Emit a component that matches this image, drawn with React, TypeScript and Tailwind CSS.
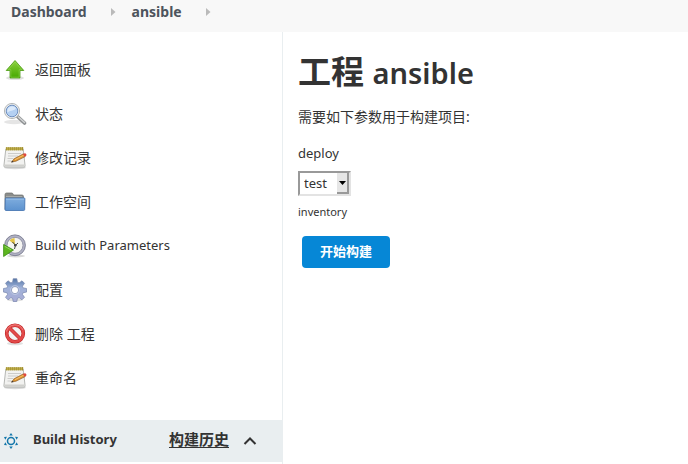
import type { ReactNode } from "react";

const BackIcon = () => (
  <svg viewBox="0 0 24 24" className="size-6">
    <defs>
      <linearGradient id="up" x1="0" y1="0" x2="0" y2="1">
        <stop offset="0" stopColor="#8ad03c" />
        <stop offset="1" stopColor="#45a800" />
      </linearGradient>
    </defs>
    <ellipse cx="12" cy="20" rx="9" ry="2" fill="#000" opacity="0.12" />
    <path d="M12 2.500 20.800 12.500H17v7.500H7V12.500H3.200z" fill="url(#up)" stroke="#4a9a12" strokeWidth="0.8" />
    <path d="M12 4 18.800 11.700H16.200V19.200H7.800V11.700H5.200z" fill="none" stroke="#9fdc62" strokeWidth="0.5" />
  </svg>
);

const SearchIcon = () => (
  <svg viewBox="0 0 24 24" className="size-6">
    <ellipse cx="11" cy="20" rx="10" ry="2.200" fill="#000" opacity="0.1" />
    <path d="m15 15 6.500 6" stroke="#8d9092" strokeWidth="3.600" strokeLinecap="round" />
    <path d="m15.500 15 6 5.500" stroke="#d0d2d3" strokeWidth="1.600" strokeLinecap="round" />
    <circle cx="9" cy="9" r="7.600" fill="#eceeef" stroke="#a5a8aa" strokeWidth="0.8" />
    <circle cx="9" cy="9" r="5.800" fill="#b4d0f2" stroke="#6f90c0" strokeWidth="1" />
    <path d="M4.300 9A4.800 4.800 0 0 1 13 6.300C11.500 9 8 8 4.300 10.500z" fill="#dceafb" />
  </svg>
);

const NotepadIcon = () => (
  <svg viewBox="0 0 24 24" className="size-6">
    <ellipse cx="12" cy="21.800" rx="11" ry="1.500" fill="#000" opacity="0.15" />
    <path d="M2.800 3h17.400l1.900 16.800a1 1 0 0 1-1 1.200H1.900a1 1 0 0 1-1-1.200z" fill="#f2f2f0" stroke="#a5a7a3" strokeWidth="0.8" />
    <path d="M1.400 18.500h20.200v1.800H1.400z" fill="#d0d0cd" />
    <path d="M2.800 1.300h17.400v2.900H2.800z" fill="#cdbc57" />
    <path
      d="M3.800 1v3.500M5.800 1v3.500M7.800 1v3.500M9.800 1v3.500M11.800 1v3.500M13.800 1v3.500M15.800 1v3.500M17.800 1v3.500M19.600 1v3.500"
      stroke="#8e7c1e"
      strokeWidth="0.8"
    />
    <path d="M5 7.500h13M5 10h10M4.500 12.500h6M4.500 15h4" stroke="#c2c2c0" strokeWidth="0.8" />
    <path d="m8.500 16 2.700-3.300L20.500 7.800l1.700 2.800-9.200 4.600z" fill="#dc942f" stroke="#87531c" strokeWidth="0.6" />
    <path d="m12 13.700 9-4.700" stroke="#f7c473" strokeWidth="0.9" />
    <path d="m19.900 8.100 1.400-.7q1.400-.3 2 .8t-.4 1.700l-1.500.9z" fill="#df4a3f" />
    <path d="m8 16.500 1.700-1.800.9 1.200z" fill="#333" />
  </svg>
);

const FolderIcon = () => (
  <svg viewBox="0 0 24 24" className="size-6">
    <defs>
      <linearGradient id="folder" x1="0" y1="0" x2="0" y2="1">
        <stop offset="0" stopColor="#7fadde" />
        <stop offset="1" stopColor="#5c92cf" />
      </linearGradient>
    </defs>
    <path d="M2 19.500V4.500Q2 3 3.500 3h5.300q1.200 0 1.700 2H19q1.500 0 1.500 1.500v13z" fill="#8b8d8b" stroke="#6c6e6c" strokeWidth="0.7" />
    <path d="M3 6.500h16" stroke="#b0b2b0" strokeWidth="0.8" />
    <path d="M3 8h18.200q.7 0 .7.700l-.2 10.800q-.1 1-1 1H3q-1 0-1-1l.3-10.800q0-.7.700-.7z" fill="url(#folder)" stroke="#3f6fad" strokeWidth="0.8" />
    <path d="M3 9.100h18" stroke="#a9caec" strokeWidth="0.7" />
  </svg>
);

const BuildIcon = () => (
  <svg viewBox="0 0 24 24" className="size-6">
    <ellipse cx="13" cy="22" rx="9" ry="1.500" fill="#000" opacity="0.15" />
    <circle cx="12" cy="11.300" r="10.400" fill="#b1b2c4" stroke="#77798f" strokeWidth="0.9" />
    <circle cx="12" cy="11.300" r="8" fill="#f5f5f2" stroke="#8d8ea3" strokeWidth="0.9" />
    <path d="M12 11 6.500 6.500A7 7 0 0 1 11.500 4z" fill="#e5c445" />
    <path d="M9.500 8 12.500 11.300 15 9M12.500 11.300 11.500 15" fill="none" stroke="#444" strokeWidth="1" />
    <circle cx="12.300" cy="11.300" r="1.300" fill="#444" />
    <path d="M.6 10.500 10.500 16 .6 22.500z" fill="#5cb51f" stroke="#3a8c10" strokeWidth="0.8" />
    <path d="m1.700 12.300 6.500 3.700" stroke="#9fe06b" strokeWidth="0.8" />
  </svg>
);

const GearIcon = () => (
  <svg viewBox="0 0 24 24" className="size-6">
    <defs>
      <linearGradient id="gear" x1="0" y1="0" x2="0" y2="1">
        <stop offset="0" stopColor="#5376a7" />
        <stop offset="0.4" stopColor="#a0b2d9" />
        <stop offset="1" stopColor="#a9acd5" />
      </linearGradient>
    </defs>
    <ellipse cx="12" cy="22" rx="8" ry="1.500" fill="#000" opacity="0.12" />
    <path
      fill="url(#gear)"
      stroke="#7585ac"
      strokeWidth="0.7"
      fillRule="evenodd"
      d="M10.200.7h3.600l.6 3.500 1.700.7 2.900-2.100 2.500 2.500-2.100 2.900.7 1.700 3.400.6v3.600l-3.400.6-.7 1.700 2.100 2.900-2.500 2.500-2.900-2.100-1.700.7-.6 3.100h-3.600l-.6-3.100-1.700-.7L5 21.800l-2.500-2.500 2.100-2.900-.7-1.700-3.400-.6v-3.600l3.400-.6.7-1.700-2.100-2.900L5 2.800l2.900 2.100 1.700-.7zM12 8.500a3.600 3.600 0 1 0 0 7.200 3.600 3.600 0 0 0 0-7.200z"
    />
    <circle cx="12" cy="12.100" r="4.500" fill="none" stroke="#c2cbe5" strokeWidth="0.8" />
  </svg>
);

const DeleteIcon = () => (
  <svg viewBox="0 0 24 24" className="size-6">
    <ellipse cx="12" cy="21.500" rx="8" ry="1.800" fill="#000" opacity="0.12" />
    <circle cx="12" cy="11.500" r="8.300" fill="#f4f3f3" stroke="#c02525" strokeWidth="3.600" />
    <path d="m6.500 6 11 11" stroke="#c02525" strokeWidth="3.600" />
    <circle cx="12" cy="11.500" r="8.300" fill="none" stroke="#e24a4a" strokeWidth="2.400" />
    <path d="m6.300 5.800 11.400 11.400" stroke="#e24a4a" strokeWidth="2.400" />
    <path d="M3.500 9.500A8.800 8.800 0 0 1 20 8" fill="none" stroke="#f18d8a" strokeWidth="0.8" />
  </svg>
);

const SunIcon = () => (
  <svg viewBox="0 0 16 16" className="size-4" fill="#1276aa">
    <circle cx="8" cy="8" r="3.500" fill="none" stroke="#1276aa" strokeWidth="1.500" />
    <path d="m8 0 1.800 2.500H6.200zM8 16l1.800-2.500H6.200zM1 4l3-.2-1.700 3zM15 4l-3-.2 1.700 3zM1 12l3 .2-1.700-3zM15 12l-3 .2 1.700-3z" />
  </svg>
);

const Arrow = () => (
  <svg viewBox="0 0 5 8" className="h-2 w-[5px]">
    <path d="M0 0 4.500 4 0 8z" fill="#bababa" />
  </svg>
);

interface Task {
  label: string;
  icon: ReactNode;
  latin?: boolean;
}

const tasks: Task[] = [
  { label: "返回面板", icon: <BackIcon /> },
  { label: "状态", icon: <SearchIcon /> },
  { label: "修改记录", icon: <NotepadIcon /> },
  { label: "工作空间", icon: <FolderIcon /> },
  { label: "Build with Parameters", icon: <BuildIcon />, latin: true },
  { label: "配置", icon: <GearIcon /> },
  { label: "删除 工程", icon: <DeleteIcon /> },
  { label: "重命名", icon: <NotepadIcon /> },
];

export default function App() {
  return (
    <div className="flex min-h-screen flex-col bg-white font-['Noto_Sans','Noto_Sans_CJK_SC',sans-serif] text-[#333]">
      {/* Breadcrumbs */}
      <nav className="flex h-8 items-center bg-[#f8f8f8] pb-2 pl-[11px] text-sm font-bold text-[#4d545d]">
        <a href="#dashboard">Dashboard</a>
        <span className="pr-4 pl-6">
          <Arrow />
        </span>
        <a href="#ansible">ansible</a>
        <span className="pl-6">
          <Arrow />
        </span>
      </nav>

      <div className="flex flex-1">
        {/* Side panel */}
        <aside className="w-[283px] shrink-0 border-r border-[#e9eef0]">
          <ul className="pt-4">
            {tasks.map((task) => (
              <li key={task.label}>
                <a href="#task" className="flex h-11 items-center gap-2 pl-[3px]">
                  {task.icon}
                  <span className={task.latin ? "text-[13px]" : "text-sm"}>{task.label}</span>
                </a>
              </li>
            ))}
          </ul>

          <div className="mt-5 flex h-[42px] items-center bg-[#e9eef0] pr-[25px] pl-[3px]">
            <SunIcon />
            <h2 className="ml-[14px] flex-1 pb-0.5 text-[13px] font-bold">Build History</h2>
            <a href="#history" className="pb-1 text-[15px] leading-5 font-bold underline underline-offset-2">
              构建历史
            </a>
            <button type="button" aria-label="Collapse" className="ml-[14px]">
              <svg viewBox="0 0 14 8" className="h-2 w-[14px]">
                <path d="M1.500 7 7 1.500 12.500 7" fill="none" stroke="#333" strokeWidth="2" />
              </svg>
            </button>
          </div>
        </aside>

        {/* Parameters form */}
        <main className="min-w-0 flex-1 px-[15px] pt-[18px]">
          <h1 className="text-[33px] leading-[44px] font-bold">
            工程 <span className="text-[29px] font-semibold">ansible</span>
          </h1>
          <p className="mt-3 text-sm leading-5">需要如下参数用于构建项目:</p>

          <form className="flex flex-col items-start">
            <label htmlFor="deploy" className="mt-4 text-[13px] leading-5">
              deploy
            </label>
            <div className="relative mt-2">
              <select
                id="deploy"
                className="block h-[25px] w-[53px] appearance-none border-2 border-t-[#999] border-r-[#e3e3e3] border-b-[#e3e3e3] border-l-[#999] bg-white pl-1 text-[13px]"
              >
                <option>test</option>
              </select>
              <span className="pointer-events-none absolute top-[2px] right-[2px] flex h-[21px] w-3 items-center justify-center border-r-2 border-b-2 border-[#999] bg-[#e6e6e6]">
                <svg viewBox="0 0 7 4" className="h-1 w-[7px]">
                  <path d="M0 0h7L3.500 4z" fill="#000" />
                </svg>
              </span>
            </div>
            <p className="mt-2 text-[11px] leading-4">inventory</p>
            <button
              type="button"
              className="mt-4 ml-1 h-8 rounded bg-[#0687d6] px-[18px] text-[13px] font-bold text-white"
            >
              开始构建
            </button>
          </form>
        </main>
      </div>
    </div>
  );
}
